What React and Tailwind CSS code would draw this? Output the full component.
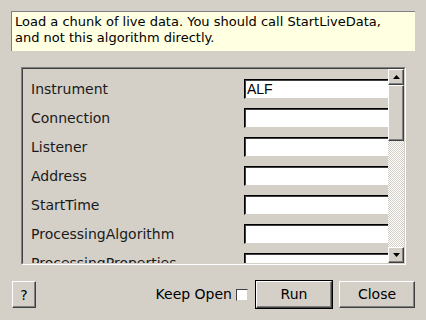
import React from "react";

const labels = [
  "Instrument",
  "Connection",
  "Listener",
  "Address",
  "StartTime",
  "ProcessingAlgorithm",
  "ProcessingProperties",
];

function Tri({ up }) {
  return (
    <svg width="7" height="4" viewBox="0 0 7 4" className="block">
      {up ? <polygon points="3.5,0 7,4 0,4" fill="#000" /> : <polygon points="0,0 7,0 3.5,4" fill="#000" />}
    </svg>
  );
}

export default function App() {
  return (
    <div
      className="w-[426px] h-[320px] bg-[#d4d0c8] flex flex-col overflow-hidden text-[14px] text-black"
      style={{ fontFamily: '"DejaVu Sans", sans-serif' }}
    >
      <div className="mt-[11px] ml-[11px] w-[404px] h-[40px] bg-[#ffffe1] border-t border-l border-[#808080] pl-[3px] pt-[2px] leading-[16px] text-[13px]">
        Load a chunk of live data. You should call StartLiveData,
        <br />
        and not this algorithm directly.
      </div>

      <div className="mt-[16px] ml-[21px] w-[385px] h-[198px] flex border-t border-l border-[#808080] border-r border-b border-r-white border-b-white">
        <div className="flex-1 flex border-t border-l border-[#404040] border-r border-b border-r-[#d4d0c8] border-b-[#d4d0c8] overflow-hidden">
          <div className="flex-1 overflow-hidden pt-[10px] pl-[8px] flex flex-col gap-[9px]">
            {labels.map((l, i) => (
              <div key={l} className="flex items-center h-[20px] shrink-0">
                <div className="w-[213px] shrink-0 text-[#1a1a1a] leading-[20px]">{l}</div>
                <div
                  className="w-[160px] h-[20px] shrink-0 bg-white border-t border-l border-[#000] border-r border-b border-r-[#d4d0c8] border-b-[#d4d0c8] shadow-[inset_1px_1px_0_#404040] pl-[2px] leading-[18px] text-black"
                  style={{ fontFamily: '"Liberation Sans", Arial, sans-serif' }}
                >
                  {i === 0 ? "ALF" : ""}
                </div>
              </div>
            ))}
          </div>
          <div className="w-[16px] shrink-0 flex flex-col">
            <div className="h-[16px] bg-[#d4d0c8] border-t border-l border-white border-r border-b border-r-[#404040] border-b-[#404040] shadow-[inset_-1px_-1px_0_#808080] flex items-center justify-center">
              <Tri up />
            </div>
            <div className="h-[56px] bg-[#d4d0c8] border-t border-l border-white border-r border-b border-r-[#404040] border-b-[#404040] shadow-[inset_-1px_-1px_0_#808080]" />
            <div className="flex-1 bg-[repeating-conic-gradient(#d4d0c8_0%_25%,#ffffff_0%_50%)] bg-[length:2px_2px]" />
            <div className="h-[16px] bg-[#d4d0c8] border-t border-l border-white border-r border-b border-r-[#404040] border-b-[#404040] shadow-[inset_-1px_-1px_0_#808080] flex items-center justify-center">
              <Tri />
            </div>
          </div>
        </div>
      </div>

      <div className="mt-[15px] flex items-center pl-[12px] pr-[11px]">
        <button className="w-[24px] h-[27px] bg-[#d4d0c8] border-t border-l border-white border-r border-b border-r-[#404040] border-b-[#404040] shadow-[inset_-1px_-1px_0_#808080] text-[14px] leading-none">
          ?
        </button>
        <div className="flex-1" />
        <span className="mr-[4px]">Keep Open</span>
        <div className="w-[12px] h-[12px] bg-white border-t border-l border-[#404040] border-r border-b border-r-[#d4d0c8] border-b-[#d4d0c8] mr-[7px]" />
        <button className="w-[78px] h-[29px] border border-black bg-[#d4d0c8] flex">
          <div className="flex-1 border-t border-l border-white border-r border-b border-r-[#404040] border-b-[#404040] shadow-[inset_-1px_-1px_0_#808080] flex items-center justify-center">
            Run
          </div>
        </button>
        <button className="ml-[6px] w-[76px] h-[27px] bg-[#d4d0c8] border-t border-l border-white border-r border-b border-r-[#404040] border-b-[#404040] shadow-[inset_-1px_-1px_0_#808080] flex items-center justify-center">
          Close
        </button>
      </div>
    </div>
  );
}
